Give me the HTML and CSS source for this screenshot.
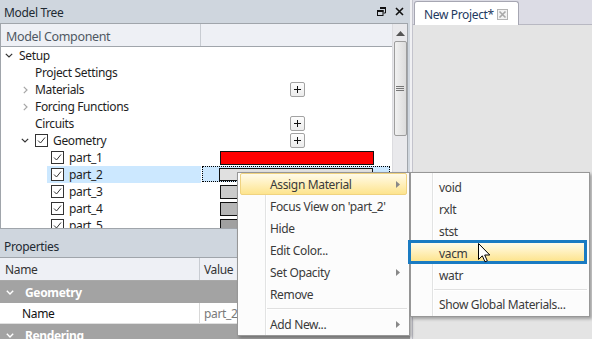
FILE: index.html
```html
<!DOCTYPE html>
<html>
<head>
<meta charset="utf-8">
<link rel="stylesheet" href="styles.css">
</head>
<body>
<div class="app">
  <div class="left">
    <div class="title">
      <span class="ttext">Model Tree</span>
      <span class="ticons">
        <svg width="9" height="9" viewBox="0 0 9 9"><path d="M3 0.5H8.5V6H6.5" fill="none" stroke="#111" stroke-width="1"/><rect x="3" y="0" width="6" height="2" fill="#111"/><rect x="0.5" y="3.5" width="5.5" height="5" fill="#d0d6dd" stroke="#111"/><rect x="0" y="3" width="6.5" height="2" fill="#111"/></svg>
        <svg width="9" height="9" viewBox="0 0 9 9"><path d="M1 1L8 8M8 1L1 8" stroke="#111" stroke-width="1.6"/></svg>
      </span>
    </div>
    <div class="tree">
      <div class="tmain">
        <div class="thead"><div class="h1">Model Component</div><div class="h2"></div></div>
        <div class="row"><div class="c1 l0"><span class="chev"><svg width="8" height="5" viewBox="0 0 8 5"><path d="M0.8 0.8L4 4L7.2 0.8" fill="none" stroke="#333" stroke-width="1.2"/></svg></span><span class="item"><span class="lbl">Setup</span></span></div><div class="c2"></div></div>
        <div class="row"><div class="c1 l1"><span class="chev"></span><span class="item"><span class="lbl">Project Settings</span></span></div><div class="c2"></div></div>
        <div class="row"><div class="c1 l1"><span class="chev"><svg width="5" height="8" viewBox="0 0 5 8"><path d="M0.8 0.8L4 4L0.8 7.2" fill="none" stroke="#a6a6a6" stroke-width="1.2"/></svg></span><span class="item"><span class="lbl">Materials</span></span></div><div class="c2"><span class="plus"><svg width="7" height="7" viewBox="0 0 7 7"><path d="M3.5 0V7M0 3.5H7" stroke="#111" stroke-width="1"/></svg></span></div></div>
        <div class="row"><div class="c1 l1"><span class="chev"><svg width="5" height="8" viewBox="0 0 5 8"><path d="M0.8 0.8L4 4L0.8 7.2" fill="none" stroke="#a6a6a6" stroke-width="1.2"/></svg></span><span class="item"><span class="lbl">Forcing Functions</span></span></div><div class="c2"></div></div>
        <div class="row"><div class="c1 l1"><span class="chev"></span><span class="item"><span class="lbl">Circuits</span></span></div><div class="c2"><span class="plus"><svg width="7" height="7" viewBox="0 0 7 7"><path d="M3.5 0V7M0 3.5H7" stroke="#111" stroke-width="1"/></svg></span></div></div>
        <div class="row"><div class="c1 l1"><span class="chev"><svg width="8" height="5" viewBox="0 0 8 5"><path d="M0.8 0.8L4 4L7.2 0.8" fill="none" stroke="#333" stroke-width="1.2"/></svg></span><span class="item"><span class="cb"><svg width="11" height="11" viewBox="0 0 11 11"><path d="M2 5.5L4.5 8L9 2.5" fill="none" stroke="#333" stroke-width="1"/></svg></span><span class="lbl">Geometry</span></span></div><div class="c2"><span class="plus"><svg width="7" height="7" viewBox="0 0 7 7"><path d="M3.5 0V7M0 3.5H7" stroke="#111" stroke-width="1"/></svg></span></div></div>
        <div class="row"><div class="c1 l2"><span class="chev"></span><span class="item"><span class="cb"><svg width="11" height="11" viewBox="0 0 11 11"><path d="M2 5.5L4.5 8L9 2.5" fill="none" stroke="#333" stroke-width="1"/></svg></span><span class="lbl">part_1</span></span></div><div class="c2"><span class="swatch red"></span></div></div>
        <div class="row"><div class="c1 l2"><span class="chev"></span><span class="item sel"><span class="cb"><svg width="11" height="11" viewBox="0 0 11 11"><path d="M2 5.5L4.5 8L9 2.5" fill="none" stroke="#333" stroke-width="1"/></svg></span><span class="lbl">part_2</span></span></div><div class="c2"><div class="focus"><span class="swatch g1"></span></div></div></div>
        <div class="row"><div class="c1 l2"><span class="chev"></span><span class="item"><span class="cb"><svg width="11" height="11" viewBox="0 0 11 11"><path d="M2 5.5L4.5 8L9 2.5" fill="none" stroke="#333" stroke-width="1"/></svg></span><span class="lbl">part_3</span></span></div><div class="c2"><span class="swatch g2"></span></div></div>
        <div class="row"><div class="c1 l2"><span class="chev"></span><span class="item"><span class="cb"><svg width="11" height="11" viewBox="0 0 11 11"><path d="M2 5.5L4.5 8L9 2.5" fill="none" stroke="#333" stroke-width="1"/></svg></span><span class="lbl">part_4</span></span></div><div class="c2"><span class="swatch g3"></span></div></div>
        <div class="row"><div class="c1 l2"><span class="chev"></span><span class="item"><span class="cb"><svg width="11" height="11" viewBox="0 0 11 11"><path d="M2 5.5L4.5 8L9 2.5" fill="none" stroke="#333" stroke-width="1"/></svg></span><span class="lbl">part_5</span></span></div><div class="c2"><span class="swatch g4"></span></div></div>
      </div>
      <div class="vscroll">
        <div class="sarrow"><svg width="9" height="5" viewBox="0 0 9 5"><path d="M0 5L4.5 0L9 5Z" fill="#555"/></svg></div>
        <div class="thumb"><svg width="8" height="6" viewBox="0 0 8 6"><path d="M0 0.5H8M0 2.5H8M0 4.5H8" stroke="#777" stroke-width="1"/></svg></div>
      </div>
    </div>
    <div class="split"></div>
    <div class="title"><span class="ttext">Properties</span></div>
    <div class="props">
      <div class="phead"><div class="pc1">Name</div><div class="pc2">Value</div></div>
      <div class="pgroup"><svg width="8" height="5" viewBox="0 0 8 5"><path d="M0.8 0.8L4 4L7.2 0.8" fill="none" stroke="#fff" stroke-width="1.4"/></svg><span>Geometry</span></div>
      <div class="prow"><div class="pc1">Name</div><div class="pc2 val">part_2</div></div>
      <div class="pgroup"><svg width="8" height="5" viewBox="0 0 8 5"><path d="M0.8 0.8L4 4L7.2 0.8" fill="none" stroke="#fff" stroke-width="1.4"/></svg><span>Rendering</span></div>
    </div>
  </div>
  <div class="right">
    <div class="tabs">
      <div class="tab">New Project*
        <span class="tclose"><svg width="11" height="11" viewBox="0 0 11 11"><rect x="0.5" y="0.5" width="10" height="10" fill="#f2f2f2" stroke="#b4b4b4"/><path d="M2.5 2.5L8.5 8.5M8.5 2.5L2.5 8.5" stroke="#a8a8a8" stroke-width="1.6"/></svg></span>
      </div>
    </div>
    <div class="doc"></div>
  </div>
</div>

<div class="menu">
  <div class="mi hot"><span>Assign Material</span><svg class="arr" width="4" height="7" viewBox="0 0 4 7"><path d="M0 0L4 3.5L0 7Z" fill="#888"/></svg></div>
  <div class="mi"><span>Focus View on 'part_2'</span></div>
  <div class="mi"><span>Hide</span></div>
  <div class="mi"><span>Edit Color...</span></div>
  <div class="mi"><span>Set Opacity</span><svg class="arr" width="4" height="7" viewBox="0 0 4 7"><path d="M0 0L4 3.5L0 7Z" fill="#888"/></svg></div>
  <div class="mi"><span>Remove</span></div>
  <div class="msep"></div>
  <div class="mi"><span>Add New...</span><svg class="arr" width="4" height="7" viewBox="0 0 4 7"><path d="M0 0L4 3.5L0 7Z" fill="#888"/></svg></div>
</div>

<div class="menu sub">
  <div class="mi"><span>void</span></div>
  <div class="mi"><span>rxlt</span></div>
  <div class="mi"><span>stst</span></div>
  <div class="mi focused"><span>vacm</span></div>
  <div class="mi"><span>watr</span></div>
  <div class="msep"></div>
  <div class="mi"><span>Show Global Materials...</span></div>
</div>

<svg class="cursor" width="13" height="20" viewBox="0 0 13 20"><path d="M0.5 0.5V16.5L4.3 12.8L7 18.8L9.3 17.8L6.7 12H11.8Z" fill="#fff" stroke="#000" stroke-width="1" stroke-linejoin="miter"/></svg>
</body>
</html>
```
FILE: styles.css
```css
* { box-sizing: border-box; }
body {
  margin: 0;
  width: 592px;
  height: 339px;
  overflow: hidden;
  position: relative;
  font-family: "Noto Sans", "Open Sans", sans-serif;
  font-size: 12px;
  letter-spacing: -0.35px;
  color: #1e1e1e;
  background: #e4e4e4;
}
.app { display: flex; height: 339px; }
.left {
  width: 410px;
  display: flex;
  flex-direction: column;
  background: #cfd6de;
}
.title {
  height: 23px;
  display: flex;
  align-items: center;
  padding: 2px 6px 0 4px;
  color: #222a33;
  flex: none;
}
.ticons { margin-left: auto; display: flex; gap: 9px; align-items: center; margin-top: -2px; }
.tree {
  height: 206px;
  width: 408px;
  flex: none;
  display: flex;
  border: 1px solid #a0a5ab;
  background: #fff;
}
.tmain { width: 391px; overflow: hidden; }
.thead {
  display: flex;
  height: 23px;
  background: #eef0f5;
  border-bottom: 1px solid #a0a5ab;
  color: #4e5863;
}
.h1 { width: 200px; border-right: 1px solid #c8ccd2; padding: 2px 0 0 5px; display: flex; align-items: center; font-size: 12.5px; }
.h2 { flex: 1; }
.row { display: flex; height: 17px; }
.c1 { width: 200px; display: flex; align-items: center; }
.l0 { padding-left: 0; }
.l1 { padding-left: 16px; }
.l2 { padding-left: 32px; }
.chev { width: 16px; height: 17px; display: flex; align-items: center; justify-content: center; flex: none; }
.item { flex: 1; height: 17px; display: flex; align-items: center; padding-left: 2px; }
.item.sel { background: #cce8ff; margin-left: -2px; padding-left: 4px; }
.lbl { margin-left: 0; white-space: nowrap; }
.cb {
  width: 13px; height: 13px;
  border: 1px solid #333;
  display: flex; align-items: center; justify-content: center;
  margin-right: 5px;
  background: #fff;
  flex: none;
}
.c2 { flex: 1; display: flex; align-items: center; justify-content: center; }
.plus {
  width: 15px; height: 15px;
  border: 1px solid #a2a2a2;
  border-radius: 2px;
  background: linear-gradient(#fdfdfd, #ececec);
  display: flex; align-items: center; justify-content: center;
  margin-left: 2px;
}
.swatch { display: block; width: 154px; height: 14px; border: 1px solid #111; }
.swatch.red { background: #ff0000; }
.swatch.g1 { background: #e0e0e0; }
.swatch.g2 { background: #cbcbcb; }
.swatch.g3 { background: #b6b6b6; }
.swatch.g4 { background: #a0a0a0; }
.focus {
  align-self: stretch;
  flex: 1;
  margin: 0 2px 1px 1px;
  border: 1px dotted #000;
  background: #cce8ff;
  display: flex;
  align-items: center;
  padding-left: 16px;
}
.focus .swatch { height: 13px; }
.vscroll {
  width: 15px;
  background: #e9e9ec;
  border-left: 1px solid #dcdce0;
  display: flex;
  flex-direction: column;
  align-items: center;
}
.sarrow { height: 17px; display: flex; align-items: center; justify-content: center; padding-top: 2px; }
.thumb {
  width: 13px;
  height: 95px;
  border: 1px solid #9d9d9d;
  border-radius: 2px;
  background: linear-gradient(90deg, #f1f1f1, #dcdcdc);
  display: flex; align-items: center; justify-content: center;
}
.split { height: 5px; flex: none; }
.props { flex: 1; background: #a3a3a3; border-top: 1px solid #a0a5ab; }
.phead { display: flex; height: 23px; background: #eef0f5; color: #333; border-bottom: 1px solid #a9a9a9; }
.pc1 { width: 200px; padding-left: 5px; display: flex; align-items: center; border-right: 1px solid #c8ccd2; }
.pc2 { flex: 1; padding-left: 4px; display: flex; align-items: center; }
.pgroup {
  height: 22px;
  display: flex; align-items: center;
  color: #fff; font-weight: bold;
  padding-left: 6px;
  gap: 11px;
}
.prow { display: flex; height: 21px; background: #fff; border-bottom: 1px solid #e0e0e0; }
.prow .pc1 { padding-left: 22px; border-right: 1px solid #d8d8d8; color: #111; }
.prow .val { color: #7a7a7a; }
.right {
  flex: 1;
  display: flex;
  flex-direction: column;
  border-left: 2px solid #f0f0f3;
}
.tabs {
  height: 25px;
  background: #dcdce5;
  border-left: 1px solid #c3c3cc;
  border-bottom: 1px solid #b8b8c2;
  display: flex;
  align-items: flex-end;
  padding-left: 1px;
}
.tab {
  width: 105px;
  height: 24px;
  margin-bottom: -1px;
  background: #fff;
  border: 1px solid #a6a6b2;
  border-bottom: none;
  border-radius: 3px 3px 0 0;
  display: flex;
  align-items: center;
  padding: 1px 0 0 9px;
  color: #1e3a5f;
}
.tclose { margin-left: 3px; display: flex; }
.doc { flex: 1; background: #e4e4e4; border-left: 1px solid #c3c3cc; }
.menu {
  position: absolute;
  left: 237px;
  top: 172px;
  width: 173px;
  background: #fcfcfc linear-gradient(90deg, transparent 27px, #e2e3e3 27px, #e2e3e3 28px, #fff 28px, #fff 29px, transparent 29px);
  border: 1px solid #979797;
  box-shadow: 2px 2px 3px rgba(0,0,0,0.3);
  padding: 0 2px 0 2px;
  color: #3a3a3a;
}
.mi {
  height: 22px;
  display: flex;
  align-items: center;
  padding-left: 29px;
  padding-right: 6px;
  border: 1px solid transparent;
  position: relative;
}
.mi .arr { margin-left: auto; }
.mi.hot {
  background: linear-gradient(#fffbea, #fff1c0 45%, #fde48e);
  border-color: #f0d380;
  border-radius: 2px;
}
.msep { height: 8px; margin-left: 27px; display: flex; align-items: center; }
.msep::after { content: ""; display: block; height: 1px; width: 100%; background: #e0e0e0; border-bottom: 1px solid #fff; }
.menu.sub {
  left: 410px;
  top: 172px;
  width: 180px;
  padding-top: 3px;
  padding-bottom: 1px;
  background: #fcfcfc linear-gradient(90deg, transparent 21px, #e2e3e3 21px, #e2e3e3 22px, #fff 22px, #fff 23px, transparent 23px);
}
.sub .mi { padding-left: 25px; }
.sub .msep { margin-left: 21px; height: 7px; }
.mi.focused::before {
  content: "";
  position: absolute;
  left: -6px;
  right: -1px;
  top: -3px;
  bottom: -1px;
  border: 3px solid #1a7bc2;
  background: linear-gradient(#fffbea, #fff1c0 45%, #fde48e);
}
.mi.focused span { position: relative; }
.cursor { position: absolute; left: 478px; top: 243px; }
```
